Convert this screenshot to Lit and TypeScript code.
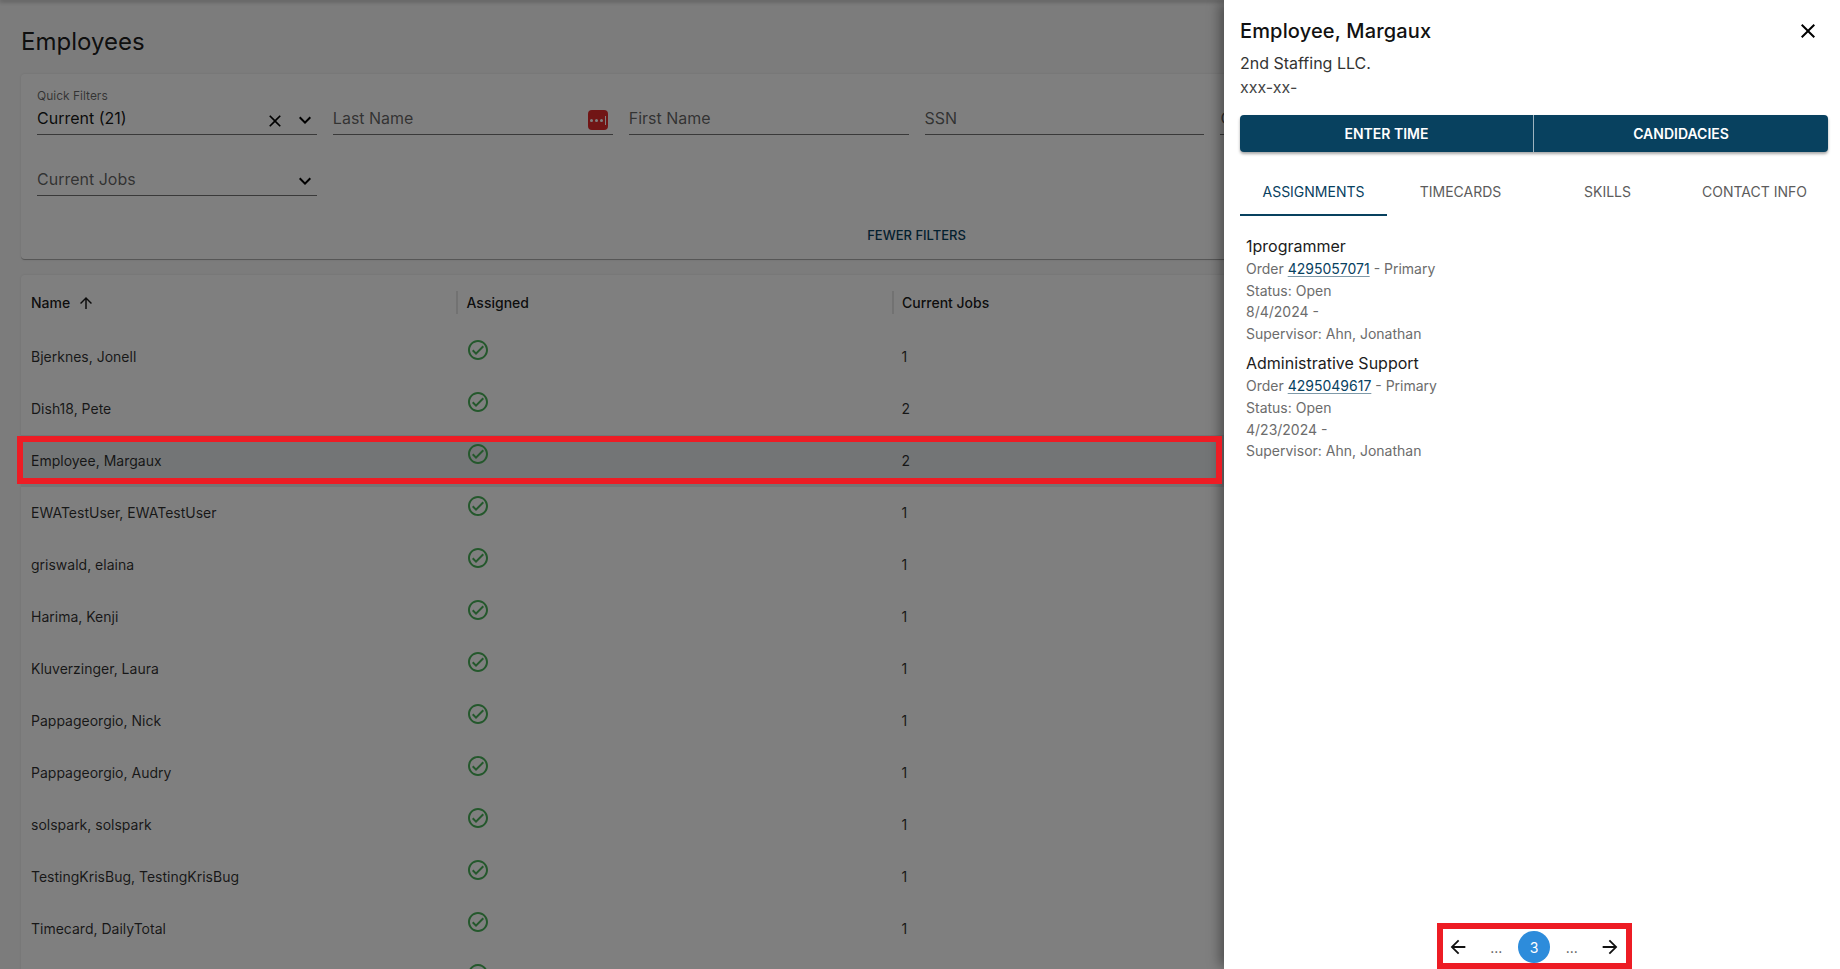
import { LitElement, html, css, svg } from "lit";
import { customElement } from "lit/decorators.js";

const P = {
  x: "M19 6.41 17.59 5 12 10.59 6.41 5 5 6.41 10.59 12 5 17.59 6.41 19 12 13.41 17.59 19 19 17.59 13.41 12z",
  down: "M7.41 8.59 12 13.17l4.59-4.58L18 10l-6 6-6-6z",
  up: "M4 12l1.41 1.41L11 7.83V20h2V7.83l5.58 5.59L20 12l-8-8-8 8z",
  back: "M20 11H7.83l5.59-5.59L12 4l-8 8 8 8 1.41-1.41L7.83 13H20v-2z",
  fwd: "M12 4l-1.41 1.41L16.17 11H4v2h12.17l-5.58 5.59L12 20l8-8z",
  check:
    "M12 2C6.48 2 2 6.48 2 12s4.48 10 10 10 10-4.48 10-10S17.52 2 12 2zm0 18c-4.41 0-8-3.59-8-8s3.59-8 8-8 8 3.59 8 8-3.59 8-8 8zm4.59-12.42L10 14.17l-2.59-2.58L6 13l4 4 8-8z",
};
const icon = (d: string, cls = "") =>
  html`<svg class="ic ${cls}" viewBox="0 0 24 24" fill="currentColor">${svg`<path d=${d}></path>`}</svg>`;

const ROWS: [string, string][] = [
  ["Bjerknes, Jonell", "1"],
  ["Dish18, Pete", "2"],
  ["Employee, Margaux", "2"],
  ["EWATestUser, EWATestUser", "1"],
  ["griswald, elaina", "1"],
  ["Harima, Kenji", "1"],
  ["Kluverzinger, Laura", "1"],
  ["Pappageorgio, Nick", "1"],
  ["Pappageorgio, Audry", "1"],
  ["solspark, solspark", "1"],
  ["TestingKrisBug, TestingKrisBug", "1"],
  ["Timecard, DailyTotal", "1"],
  ["", ""],
];

const ASSIGNMENTS = [
  { title: "1programmer", order: "4295057071", date: "8/4/2024 -" },
  { title: "Administrative Support", order: "4295049617", date: "4/23/2024 -" },
];

@customElement("app-root")
export class AppRoot extends LitElement {
  static styles = css`
    :host {
      display: block;
      position: relative;
      width: 1840px;
      height: 969px;
      overflow: hidden;
      background: #f9f9f9;
      font-family: Inter, "Liberation Sans", sans-serif;
      color: #000;
    }
    .ic { display: block; flex: none; width: 24px; height: 24px; }
    .topbar { height: 0; box-shadow: 0 0 5px 1px rgba(0, 0, 0, 0.5); }
    main { padding: 26px 21px 0; }
    h1 { margin: 0; font-size: 24px; font-weight: 400; line-height: 32px; color: rgba(0, 0, 0, 0.9); }
    .card { background: #fff; border-radius: 4px; box-shadow: 0 0 3px rgba(0, 0, 0, 0.1); }
    .filters {
      margin-top: 16px;
      padding: 15px 16px 6px;
      border-bottom: 1px solid #acacac;
    }
    .grid { display: grid; grid-template-columns: repeat(5, 279.85px); column-gap: 16px; row-gap: 15px; }
    .field {
      height: 46px;
      box-sizing: border-box;
      border-bottom: 1px solid rgba(0, 0, 0, 0.55);
      display: flex;
      flex-direction: column;
      justify-content: flex-end;
    }
    .lbl { font-size: 12px; line-height: 14px; color: rgba(0, 0, 0, 0.6); margin-bottom: -1px; }
    .line { display: flex; align-items: center; height: 32px; font-size: 16px; color: rgba(0, 0, 0, 0.62); }
    .line.val { color: rgba(0, 0, 0, 0.92); }
    .line .grow { flex: 1; margin-top: -1px; }
    .line .ic.sm { width: 20px; height: 20px; margin-right: 8px; margin-top: 5px; color: #000; }
    .line .ic.ch { margin-top: 3px; color: #000; }
    .lp {
      width: 20px;
      height: 20px;
      box-sizing: border-box;
      margin: 4px 5px 0 0;
      border-radius: 4px;
      background: #e22a2a;
      display: flex;
      align-items: center;
      gap: 2px;
      padding-left: 2px;
    }
    .lp i { width: 3px; height: 3px; border-radius: 50%; background: #fff; }
    .lp b { width: 1px; height: 9px; background: #fff; }
    .more {
      margin-top: 21px;
      height: 36px;
      display: flex;
      align-items: center;
      justify-content: center;
      font-size: 13px;
      font-weight: 500;
      color: #08415f;
      padding-right: 7px;
    }
    .table { margin-top: 15px; }
    .hd, .row { display: grid; grid-template-columns: 435px 435.5px 1fr; }
    .hd { height: 56px; padding-bottom: 1px; box-sizing: border-box; font-size: 14px; font-weight: 500; color: rgba(0, 0, 0, 0.9); }
    .hd > div { display: flex; align-items: center; gap: 8.5px; }
    .hd > div:first-child { padding-left: 10px; gap: 7px; }
    .hd .ic { width: 18px; height: 18px; }
    .sep { width: 2px; height: 23px; background: #e4e4e4; }
    .row { height: 52px; font-size: 14px; color: rgba(0, 0, 0, 0.82); }
    .row.sel { background: #e6eaec; }
    .row > div { padding: 0 0 2px 10px; display: flex; align-items: center; }
    .row .ok { align-items: flex-start; padding: 7px 0 0 10px; color: #48b058; }
    aside {
      position: absolute;
      top: 0;
      right: 0;
      bottom: 0;
      width: 616px;
      box-sizing: border-box;
      padding: 0 12px 0 16px;
      background: #fff;
      display: flex;
      flex-direction: column;
      box-shadow: -6px 0 12px -2px rgba(0, 0, 0, 0.4);
    }
    .scrim { position: absolute; inset: 0; background: rgba(0, 0, 0, 0.5); }
    .ph { display: flex; align-items: center; justify-content: space-between; height: 24px; margin-top: 19px; padding-right: 8px; }
    .ph h2 { margin: 0; font-size: 20px; font-weight: 500; line-height: 24px; letter-spacing: 0.15px; color: #111; }
    .co { margin-top: 8px; font-size: 16px; line-height: 24px; color: #333; }
    .ssn { font-size: 16px; line-height: 24px; color: #444; }
    .btns {
      margin-top: 16px;
      height: 37px;
      display: grid;
      grid-template-columns: 293px 1fr;
      background: #08415f;
      border-radius: 4px;
      box-shadow: 0 2px 3px rgba(0, 0, 0, 0.35);
      color: #fff;
      font-size: 14px;
      font-weight: 600;
    }
    .btns div { display: flex; align-items: center; justify-content: center; }
    .btns div + div { border-left: 1px solid #9db3bf; }
    .tabs { margin-top: 16px; display: grid; grid-template-columns: repeat(4, 1fr); height: 48px; }
    .tabs div {
      display: flex;
      align-items: center;
      justify-content: center;
      font-size: 14px;
      color: #5c5c5c;
      box-sizing: border-box;
      padding-bottom: 2px;
    }
    .tabs .on { color: #08415f; border-bottom: 2px solid #08415f; padding-bottom: 0; }
    .list { padding: 18px 0 0 6px; }
    .item { margin-bottom: 7.5px; font-size: 14px; line-height: 21.33px; color: #6c6c6c; }
    .item h3 { margin: 0; font-size: 16px; font-weight: 400; line-height: 24px; color: #1c1c1c; }
    .item .ord { line-height: 22px; }
    .item a { color: #08415f; text-decoration: underline; text-decoration-color: #7f9aa9; text-underline-offset: 2px; }
    .pager {
      margin: auto auto 0;
      box-sizing: border-box;
      width: 195px;
      height: 46px;
      padding-top: 2px;
      border: 6px solid #ed1c24;
      display: flex;
      align-items: center;
      justify-content: center;
      gap: 6px;
      font-size: 14px;
      color: #555;
    }
    .pager > * { width: 32px; height: 32px; display: flex; align-items: center; justify-content: center; }
    .pager .ic { width: 22px; height: 22px; color: #111; padding: 5px; box-sizing: content-box; }
    .pager .ic.prev { margin: 0 1px 0 -1px; }
    .pager .cur { border-radius: 50%; background: #2d8cdb; color: #fff; }
    .frame {
      position: absolute;
      left: 17px;
      top: 436px;
      width: 1205px;
      height: 48px;
      box-sizing: border-box;
      border: 6px solid #ed1c24;
    }
  `;

  render() {
    return html`
      <div class="topbar"></div>
      <main>
        <h1>Employees</h1>
        <section class="card filters">
          <div class="grid">
            <div class="field">
              <div class="lbl">Quick Filters</div>
              <div class="line val">
                <span class="grow">Current (21)</span>
                ${icon(P.x, "sm")}${icon(P.down, "ch")}
              </div>
            </div>
            <div class="field">
              <div class="line">
                <span class="grow">Last Name</span>
                <span class="lp"><i></i><i></i><i></i><b></b></span>
              </div>
            </div>
            <div class="field"><div class="line"><span class="grow">First Name</span></div></div>
            <div class="field"><div class="line"><span class="grow">SSN</span></div></div>
            <div class="field"><div class="line"><span class="grow">City</span></div></div>
            <div class="field">
              <div class="line"><span class="grow">Current Jobs</span>${icon(P.down, "ch")}</div>
            </div>
          </div>
          <div class="more">FEWER FILTERS</div>
        </section>
        <section class="card table">
          <div class="hd">
            <div>Name ${icon(P.up)}</div>
            <div><span class="sep"></span>Assigned</div>
            <div><span class="sep"></span>Current Jobs</div>
          </div>
          ${ROWS.map(
            ([n, c], i) => html`<div class="row ${i === 2 ? "sel" : ""}">
              <div>${n}</div>
              <div class="ok">${icon(P.check)}</div>
              <div>${c}</div>
            </div>`
          )}
        </section>
      </main>
      <div class="scrim"></div>
      <aside>
        <div class="ph"><h2>Employee, Margaux</h2>${icon(P.x)}</div>
        <div class="co">2nd Staffing LLC.</div>
        <div class="ssn">xxx-xx-</div>
        <div class="btns"><div>ENTER TIME</div><div>CANDIDACIES</div></div>
        <div class="tabs">
          <div class="on">ASSIGNMENTS</div>
          <div>TIMECARDS</div>
          <div>SKILLS</div>
          <div>CONTACT INFO</div>
        </div>
        <div class="list">
          ${ASSIGNMENTS.map(
            (a) => html`<div class="item">
              <h3>${a.title}</h3>
              <div class="ord">Order <a href="#">${a.order}</a> - Primary</div>
              <div>Status: Open</div>
              <div>${a.date}</div>
              <div>Supervisor: Ahn, Jonathan</div>
            </div>`
          )}
        </div>
        <div class="pager">
          ${icon(P.back, "prev")}
          <span>...</span>
          <span class="cur">3</span>
          <span>...</span>
          ${icon(P.fwd)}
        </div>
      </aside>
      <div class="frame"></div>
    `;
  }
}
